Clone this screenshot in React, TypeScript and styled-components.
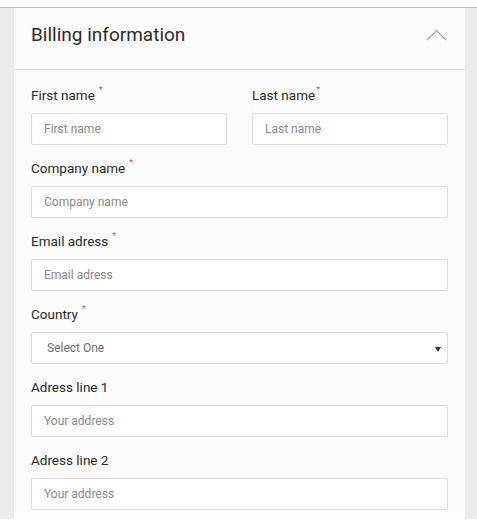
import React from "react";
import styled, { createGlobalStyle } from "styled-components";

const Global = createGlobalStyle`
  html, body { margin: 0; padding: 0; background: #ffffff; }
  body { font-family: Roboto, "Liberation Sans", sans-serif; }
  * { box-sizing: border-box; }
`;

const Page = styled.div`
  padding-top: 7px;
  padding-bottom: 12px;
`;

const Frame = styled.div`
  border-top: 1px solid #bdbdbd;
  background: #ececec;
  padding: 0 12px 0 14px;
`;

const Card = styled.section`
  background: #fcfcfc;
`;

const Header = styled.div`
  height: 62px;
  border-bottom: 1px solid #dedede;
  display: flex;
  align-items: center;
  justify-content: space-between;
  padding: 0 18px 8px 17px;
`;

const Title = styled.h2`
  margin: 0;
  font-size: 19px;
  font-weight: 400;
  color: #2b2b2b;
`;

const Body = styled.div`
  padding: 16px 17px 9px 17px;
  display: flex;
  flex-direction: column;
  gap: 14px;
`;

const Row = styled.div`
  display: grid;
  grid-template-columns: 196px 196px;
  justify-content: space-between;
`;

const Field = styled.div`
  display: flex;
  flex-direction: column;
  gap: 9px;
`;

const Label = styled.label`
  font-size: 13.5px;
  line-height: 18px;
  color: #2a2a2a;
  display: flex;
  align-items: flex-start;
`;

const Req = styled.span<{ $tight?: boolean }>`
  color: #d9534f;
  font-size: 9px;
  line-height: 9px;
  margin-left: ${(p) => (p.$tight ? "1px" : "4px")};
`;

const Input = styled.input`
  height: 32px;
  width: 100%;
  border: 1px solid #dcdcdc;
  border-radius: 2px;
  background: #ffffff;
  padding: 0 12px;
  font-family: Roboto, "Liberation Sans", sans-serif;
  font-size: 12px;
  color: #333;
  outline: none;
  &::placeholder { color: #8a8a8a; }
`;

const SelectBox = styled.div`
  height: 32px;
  border: 1px solid #dcdcdc;
  border-radius: 2px;
  background: #ffffff;
  display: flex;
  align-items: center;
  justify-content: space-between;
  padding: 0 6px 0 15px;
  font-size: 12px;
  color: #6e6e6e;
`;

const Caret = styled.span`
  width: 0;
  height: 0;
  border-left: 3px solid transparent;
  border-right: 3px solid transparent;
  border-top: 5px solid #333;
  margin-top: 2px;
`;

const Chevron = () => (
  <svg width="21" height="12" viewBox="0 0 21 12">
    <polyline points="1,11 10.5,1.5 20,11" fill="none" stroke="#a0a0a0" strokeWidth="1.1" />
  </svg>
);

export default function App() {
  return (
    <Page>
      <Global />
      <Frame>
        <Card>
          <Header>
            <Title>Billing information</Title>
            <Chevron />
          </Header>
          <Body>
            <Row>
              <Field>
                <Label>First name<Req>*</Req></Label>
                <Input placeholder="First name" />
              </Field>
              <Field>
                <Label>Last name<Req $tight>*</Req></Label>
                <Input placeholder="Last name" />
              </Field>
            </Row>
            <Field>
              <Label>Company name<Req>*</Req></Label>
              <Input placeholder="Company name" />
            </Field>
            <Field>
              <Label>Email adress<Req>*</Req></Label>
              <Input placeholder="Email adress" />
            </Field>
            <Field>
              <Label>Country<Req>*</Req></Label>
              <SelectBox>
                <span>Select One</span>
                <Caret />
              </SelectBox>
            </Field>
            <Field>
              <Label>Adress line 1</Label>
              <Input placeholder="Your address" />
            </Field>
            <Field>
              <Label>Adress line 2</Label>
              <Input placeholder="Your address" />
            </Field>
          </Body>
        </Card>
      </Frame>
    </Page>
  );
}
